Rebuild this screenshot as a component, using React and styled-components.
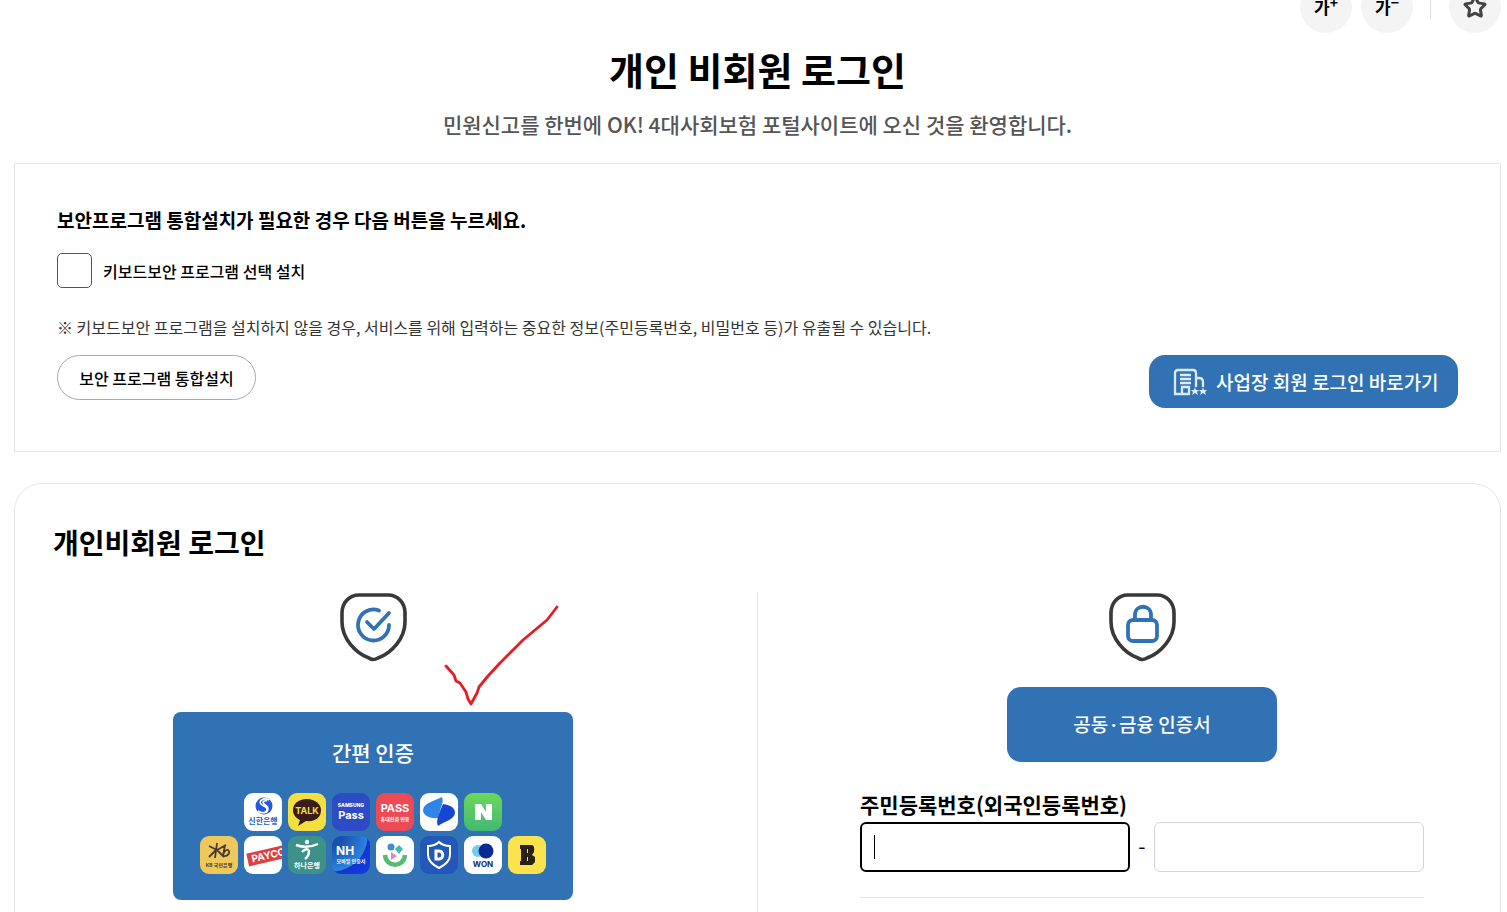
import styled, { createGlobalStyle } from 'styled-components';
import { Star } from 'lucide-react';

const GlobalStyle = createGlobalStyle`
* {
box-sizing: border-box;
}
body {
margin: 0;
background-color: white;
color: #000;
}
body, button, input {
font-family: "Noto Sans CJK KR", "Noto Sans", sans-serif;
}
h1, h2, p {
margin: 0;
}
`;

const Page = styled.main`
height: 100vh;
overflow: hidden;
padding: 0 6px 0 14px;
`;

const Tools = styled.div`
display: flex;
justify-content: flex-end;
align-items: center;
margin-top: -19px;
height: 52px;
`;
const ToolButton = styled.button`
width: 52px;
height: 52px;
margin-left: 9px;
padding: 0;
border: none;
border-radius: 50%;
background-color: #f4f4f4;
color: ${props => props.$muted ? '#444' : '#000'};
font-size: 17px;
line-height: 50px;
font-weight: 700;
cursor: pointer;
display: flex;
align-items: center;
justify-content: center;
`;
const Sign = styled.sup`
font-size: 14px;
line-height: 14px;
align-self: flex-start;
margin-top: 14px;
`;
const ToolLine = styled.span`
width: 1px;
height: 24px;
margin: 0 9px 0 17px;
background-color: #ddd;
`;

const Title = styled.h1`
margin-top: 6px;
text-align: center;
font-size: 38px;
line-height: 60px;
font-weight: 700;
`;
const SubTitle = styled.p`
margin-top: 9px;
text-align: center;
font-size: 21px;
line-height: 32px;
font-weight: 500;
color: #555;
`;

const Security = styled.section`
margin-top: 23px;
height: 289px;
padding: 40px 42px;
border: 1px solid #e5e5e5;
`;
const SecurityTitle = styled.h2`
font-size: 19px;
line-height: 32px;
font-weight: 700;
`;
const CheckLabel = styled.label`
display: flex;
align-items: center;
gap: 11px;
margin-top: 17px;
font-size: 16px;
line-height: 24px;
font-weight: 500;
`;
const Check = styled.input`
appearance: none;
width: 35px;
height: 35px;
margin: 0;
border: 1px solid #555;
border-radius: 5px;
background-color: white;
`;
const Note = styled.p`
margin-top: 27px;
font-size: 16px;
line-height: 24px;
color: #333;
`;
const ButtonRow = styled.div`
display: flex;
align-items: flex-start;
justify-content: space-between;
margin-top: 16px;
`;
const InstallButton = styled.button`
width: 199px;
height: 45px;
padding: 0;
border: 1px solid #aaa;
border-radius: 23px;
background-color: white;
color: #000;
font-size: 16px;
font-weight: 500;
cursor: pointer;
`;
const CompanyButton = styled.button`
display: flex;
align-items: center;
gap: 5px;
height: 53px;
width: 309px;
padding: 0 24px;
border: none;
border-radius: 16px;
background-color: #3172b5;
color: white;
font-size: 19px;
font-weight: 500;
white-space: nowrap;
cursor: pointer;
svg {
flex-shrink: 0;
}
`;

const Login = styled.section`
margin-top: 31px;
padding: 34px 38px 60px 38px;
border: 1px solid #e5e5e5;
border-radius: 28px;
`;
const LoginTitle = styled.h2`
font-size: 28px;
line-height: 48px;
font-weight: 700;
`;
const Columns = styled.div`
display: grid;
grid-template-columns: 1fr 1px 1fr;
column-gap: 64px;
margin-top: 26px;
`;
const Divider = styled.div`
min-height: 420px;
background-color: #e5e5e5;
`;
const Column = styled.div`
position: relative;
display: flex;
flex-direction: column;
align-items: center;
`;
const TickMark = styled.svg`
position: absolute;
top: 10px;
left: calc(50% + 69px);
`;

const EasyAuth = styled.button`
display: flex;
flex-direction: column;
align-items: center;
width: 400px;
height: 188px;
margin-top: 50px;
padding: 24px 0 0 0;
border: none;
border-radius: 8px;
background-color: #3172b5;
color: white;
font-size: 21px;
line-height: 32px;
font-weight: 500;
cursor: pointer;
`;
const Providers = styled.span`
display: flex;
gap: 6px;
margin-top: ${props => props.$first ? '25px' : '5px'};
`;
const Provider = styled.svg`
display: block;
width: 38px;
height: 38px;
border-radius: 9px;
background: ${props => props.$bg};
`;

const CertButton = styled.button`
width: 270px;
height: 75px;
margin-top: 25px;
padding: 0 0 2px 0;
border: none;
border-radius: 14px;
background-color: #3172b5;
color: white;
font-size: 19px;
font-weight: 500;
cursor: pointer;
`;
const Form = styled.form`
align-self: stretch;
margin: 26px 38px 0 38px;
padding-bottom: 25px;
border-bottom: 1px solid #e5e5e5;
`;
const FormLabel = styled.label`
display: block;
font-size: 21px;
line-height: 32px;
font-weight: 700;
`;
const Numbers = styled.div`
display: flex;
align-items: center;
margin-top: 2px;
`;
const Field = styled.span`
position: relative;
display: flex;
flex: 1;
min-width: 0;
`;
const Caret = styled.span`
position: absolute;
top: 13px;
left: 14px;
width: 1px;
height: 24px;
background-color: #000;
pointer-events: none;
`;
const NumberInput = styled.input`
flex: 1;
min-width: 0;
height: 50px;
padding: 0 12px;
border: 1px solid #d5d5d5;
border-radius: 6px;
outline: none;
font-size: 17px;
caret-color: transparent;
&:focus {
border: 2px solid #000;
}
`;
const Dash = styled.span`
width: 24px;
padding-bottom: 4px;
text-align: center;
font-size: 21px;
line-height: 24px;
`;

const Shield = ({children}) => (
    <svg width="68" height="70" viewBox="0 0 68 70" fill="none" strokeLinecap="round" strokeLinejoin="round" aria-hidden="true">
        <path d="M20 3H49C59 3 66 11 66 21V30C66 46 53 61 39 66Q34 69 30 66C16 61 3 46 3 30V21C3 11 10 3 20 3Z" stroke="#393939" strokeWidth="3.6"/>
        <g stroke="#3172b5" strokeWidth="3.8">{children}</g>
    </svg>
)

const BuildingIcon = () => (
    <svg width="38" height="30" viewBox="0 0 38 30" fill="none" stroke="#dceafa" strokeWidth="2.3" aria-hidden="true">
        <path d="M17 27H2V6Q2 3 5 3H20Q23 3 23 6V20M9 27V20H16V27M7 8H18M7 12H18M7 16H18M23 11H26Q30 11 30 15V20"/>
        <path fill="#dceafa" stroke="none" d="M22 20L23 23H26L24 25L25 28L22 26L19 28L20 25L18 23H21ZM30 20L31 23H34L32 25L33 28L30 26L27 28L28 25L26 23H29Z"/>
    </svg>
)

const Word = ({y, size, color = 'white', weight = 700, children}) => (
    <text x="19" y={y} textAnchor="middle" fontSize={size} fontWeight={weight} fontFamily='Inter, "Noto Sans CJK KR", sans-serif' fill={color}>{children}</text>
)

const firstRow = [
    {name: 'shinhan', bg: 'white', art: <>
        <circle cx="20" cy="13" r="8.5" fill="#2458d8"/>
        <path d="M25 7C20 4 14 8 17 11C19 14 24 13 23 17C22 21 17 20 14 18M23 8C20 7 18 9 20 11C23 13 26 15 22 20" stroke="white" strokeWidth="1.6" fill="none"/>
        <Word y="31" size="8" color="#2458c8">신한은행</Word>
    </>},
    {name: 'kakao', bg: '#f4df43', art: <>
        <path d="M19 6C10 6 5 11 5 17C5 22 8 25 12 27L10 33L18 28C28 29 33 24 33 17C33 11 27 6 19 6Z" fill="#3b1d18"/>
        <Word y="21" size="9" color="#f4df43">TALK</Word>
    </>},
    {name: 'samsung', bg: '#2c4bc5', art: <>
        <Word y="14" size="5" weight="800">SAMSUNG</Word>
        <Word y="26" size="11">Pass</Word>
    </>},
    {name: 'pass', bg: '#ec4a55', art: <>
        <Word y="19" size="11">PASS</Word>
        <Word y="28" size="5">휴대전화 인증</Word>
    </>},
    {name: 'toss', bg: 'white', art: <>
        <path d="M22 4C24 9 21 13 20 18L18 25C9 26 3 22 3 17C4 10 14 8 22 4Z" fill="#3085e8"/>
        <path d="M23 11C31 12 35 15 35 20C34 27 25 28 18 33C16 28 18 24 20 18Z" fill="#1746d2"/>
    </>},
    {name: 'naver', bg: 'linear-gradient(#6bd85b, #43b873)', art: <path d="M11 27V11H17L22 19V11H28V27H22L17 19V27Z" fill="white"/>},
]

const secondRow = [
    {name: 'kb', bg: '#efc85b', art: <>
        <path d="M17 7L15 22M9 10L17 14L26 9M16 14L9 21M17 14L24 21M25 9L23 20C28 21 31 16 28 14C26 13 23 17 23 20" stroke="#4b3b2b" strokeWidth="1.8" fill="none"/>
        <Word y="31" size="5" color="#4b3b2b">KB 국민은행</Word>
    </>},
    {name: 'payco', bg: 'white', art: <g transform="rotate(-13 19 19)">
        <rect x="3" y="14" width="40" height="13" fill="#dc4040"/>
        <text x="7" y="24" fontSize="10" fontWeight="700" fontFamily="Inter, sans-serif" fill="white">PAYCO</text>
    </g>},
    {name: 'hana', bg: '#3d9188', art: <>
        <circle cx="19" cy="6" r="2.2" fill="white"/>
        <path d="M8 9Q19 13 30 8M14 16Q19 11 21 15Q21 20 17 23" stroke="white" strokeWidth="2.4" fill="none"/>
        <Word y="32" size="7">하나은행</Word>
    </>},
    {name: 'nh', bg: 'radial-gradient(circle at 0 0, #1a4fae 20%, #2b83df 65%, #1236ce 67%, #133ee8)', art: <>
        <text x="4" y="19" fontSize="12" fontWeight="700" fontFamily="Inter, sans-serif" fill="white">NH</text>
        <Word y="27" size="5">모바일 인증서</Word>
    </>},
    {name: 'smile', bg: 'white', art: <>
        <circle cx="15" cy="11" r="3.5" fill="#418bd8"/>
        <path d="M23 9L27 13L23 18L19 13Z" fill="#45b8aa"/>
        <path d="M15 16L21 20L15 24Z" fill="#df83cf"/>
        <path d="M9 19C10 32 28 32 29 19" stroke="#57ba72" strokeWidth="4.5" fill="none"/>
    </>},
    {name: 'dream', bg: '#2358b8', art: <>
        <path d="M19 6C22 9 26 10 30 10V19C30 25 25 29 19 32C13 29 8 25 8 19V10C12 10 16 9 19 6Z" fill="none" stroke="white" strokeWidth="2"/>
        <path d="M16 15H19C24 15 24 23 19 23H16Z" fill="none" stroke="white" strokeWidth="3"/>
    </>},
    {name: 'woori', bg: 'white', art: <>
        <circle cx="14" cy="15" r="6" fill="#72cce8"/>
        <circle cx="22" cy="15" r="7.5" fill="#092b91"/>
        <Word y="31" size="8" color="#10266e">WON</Word>
    </>},
    {name: 'banksalad', bg: '#fae34c', art: <path fillRule="evenodd" d="M12 9H24Q27 10 26 16L24 19L27 21V26L24 29H12V25H13V13H12ZM19 13V17H20V13ZM19 21V25H20V21Z" fill="#292018"/>},
]

const ProviderRow = ({items, first}) => (
    <Providers $first={first}>
        {items.map(item => (
            <Provider key={item.name} $bg={item.bg} viewBox="0 0 38 38" aria-hidden="true">
                {item.art}
            </Provider>
        ))}
    </Providers>
)

const App = () => {
    return (
        <Page>
            <GlobalStyle/>
            <Tools>
                <ToolButton aria-label="글자 크게">가<Sign>+</Sign></ToolButton>
                <ToolButton aria-label="글자 작게">가<Sign>−</Sign></ToolButton>
                <ToolLine/>
                <ToolButton $muted aria-label="즐겨찾기"><Star size={24} strokeWidth={3}/></ToolButton>
            </Tools>
            <Title>개인 비회원 로그인</Title>
            <SubTitle>민원신고를 한번에 OK! 4대사회보험 포털사이트에 오신 것을 환영합니다.</SubTitle>

            <Security>
                <SecurityTitle>보안프로그램 통합설치가 필요한 경우 다음 버튼을 누르세요.</SecurityTitle>
                <CheckLabel>
                    <Check type="checkbox"/>
                    키보드보안 프로그램 선택 설치
                </CheckLabel>
                <Note>※ 키보드보안 프로그램을 설치하지 않을 경우, 서비스를 위해 입력하는 중요한 정보(주민등록번호, 비밀번호 등)가 유출될 수 있습니다.</Note>
                <ButtonRow>
                    <InstallButton>보안 프로그램 통합설치</InstallButton>
                    <CompanyButton><BuildingIcon/>사업장 회원 로그인 바로가기</CompanyButton>
                </ButtonRow>
            </Security>

            <Login>
                <LoginTitle>개인비회원 로그인</LoginTitle>
                <Columns>
                    <Column>
                        <Shield>
                            <path d="M40 18.5A15.5 15.5 0 1 0 50 33M28 30L35 37L50 21"/>
                        </Shield>
                        <TickMark width="120" height="106" viewBox="0 0 120 106" fill="none" stroke="#e51c24" strokeWidth="2.8" strokeLinecap="round" strokeLinejoin="round" aria-hidden="true">
                            <path d="M4 64L12 73L14 79L18 81L24 90L26 97L29 102L35 91L37 85L46 74L58 61L71 48L81 38L93 28L105 18L115 5"/>
                        </TickMark>
                        <EasyAuth>
                            간편 인증
                            <ProviderRow items={firstRow} first/>
                            <ProviderRow items={secondRow}/>
                        </EasyAuth>
                    </Column>
                    <Divider/>
                    <Column>
                        <Shield>
                            <rect x="20" y="28" width="29" height="21" rx="5"/>
                            <path d="M27 28V23C27 12 43 12 43 23V28"/>
                        </Shield>
                        <CertButton>공동·금융 인증서</CertButton>
                        <Form>
                            <FormLabel htmlFor="front">주민등록번호(외국인등록번호)</FormLabel>
                            <Numbers>
                                <Field>
                                    <NumberInput id="front" type="text" autoFocus/>
                                    <Caret/>
                                </Field>
                                <Dash>-</Dash>
                                <Field>
                                    <NumberInput type="password" aria-label="주민등록번호 뒷자리"/>
                                </Field>
                            </Numbers>
                        </Form>
                    </Column>
                </Columns>
            </Login>
        </Page>
    )
}

export default App;
